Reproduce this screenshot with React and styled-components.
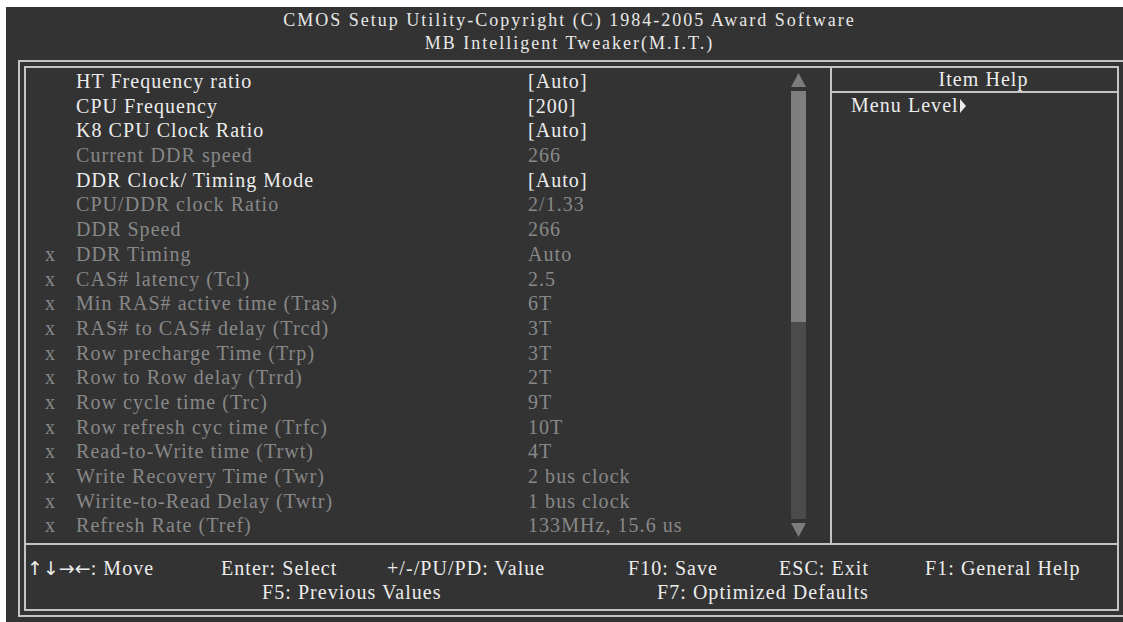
import styled, { createGlobalStyle } from "styled-components"

const rows = [
    { label: "HT Frequency ratio", value: "[Auto]", on: true },
    { label: "CPU Frequency", value: "[200]", on: true },
    { label: "K8 CPU Clock Ratio", value: "[Auto]", on: true },
    { label: "Current DDR speed", value: "266" },
    { label: "DDR Clock/ Timing Mode", value: "[Auto]", on: true },
    { label: "CPU/DDR clock Ratio", value: "2/1.33" },
    { label: "DDR Speed", value: "266" },
    { x: true, label: "DDR Timing", value: "Auto" },
    { x: true, label: "CAS# latency (Tcl)", value: "2.5" },
    { x: true, label: "Min RAS# active time (Tras)", value: "6T" },
    { x: true, label: "RAS# to CAS# delay (Trcd)", value: "3T" },
    { x: true, label: "Row precharge Time (Trp)", value: "3T" },
    { x: true, label: "Row to Row delay (Trrd)", value: "2T" },
    { x: true, label: "Row cycle time (Trc)", value: "9T" },
    { x: true, label: "Row refresh cyc time (Trfc)", value: "10T" },
    { x: true, label: "Read-to-Write time (Trwt)", value: "4T" },
    { x: true, label: "Write Recovery Time (Twr)", value: "2 bus clock" },
    { x: true, label: "Wirite-to-Read Delay (Twtr)", value: "1 bus clock" },
    { x: true, label: "Refresh Rate (Tref)", value: "133MHz, 15.6 us" },
]

export default function App() {
    return (
        <>
            <GlobalStyle />
            <Screen>
                <Header>
                    <div>CMOS Setup Utility-Copyright (C) 1984-2005 Award Software</div>
                    <div>MB Intelligent Tweaker(M.I.T.)</div>
                </Header>
                <OuterFrame>
                    <InnerFrame>
                        <Main>
                            <ListPanel>
                                <Rows>
                                    {rows.map((r) => (
                                        <Row key={r.label} $on={r.on}>
                                            <span>{r.x ? "x" : ""}</span>
                                            <span>{r.label}</span>
                                            <span>{r.value}</span>
                                        </Row>
                                    ))}
                                </Rows>
                                <ScrollBar>
                                    <Arrow viewBox="0 0 15 14">
                                        <polygon points="7.5,0 15,14 0,14" />
                                    </Arrow>
                                    <Thumb />
                                    <Track />
                                    <Arrow viewBox="0 0 15 14">
                                        <polygon points="0,0 15,0 7.5,14" />
                                    </Arrow>
                                </ScrollBar>
                            </ListPanel>
                            <HelpPanel>
                                <HelpTitle>Item Help</HelpTitle>
                                <HelpLine>
                                    Menu Level
                                    <svg width="6" height="14" viewBox="0 0 6 14">
                                        <polygon points="0,0 6,7 0,14" fill="#ececec" />
                                    </svg>
                                </HelpLine>
                            </HelpPanel>
                        </Main>
                        <Footer>
                            <KeyRow $cols="194px 166px 241px 151px 146px 1fr" $pad={1}>
                                <span><Arrows>↑↓→←</Arrows>: Move</span>
                                <span>Enter: Select</span>
                                <span>+/-/PU/PD: Value</span>
                                <span>F10: Save</span>
                                <span>ESC: Exit</span>
                                <span>F1: General Help</span>
                            </KeyRow>
                            <KeyRow $cols="395px 1fr" $pad={236}>
                                <span>F5: Previous Values</span>
                                <span>F7: Optimized Defaults</span>
                            </KeyRow>
                        </Footer>
                    </InnerFrame>
                </OuterFrame>
            </Screen>
        </>
    )
}

const GlobalStyle = createGlobalStyle`
    html, body {
        margin: 0;
        background: #ffffff;
        overflow: hidden;
    }
`
const Screen = styled.div`
    width: 1127px;
    height: 615px;
    margin: 7px 0 0 6px;
    background-color: #333333;
    font-family: "Liberation Serif", "Times New Roman", serif;
    color: #ececec;
    overflow: hidden;
`
const Header = styled.div`
    height: 53px;
    box-sizing: border-box;
    padding-top: 2px;
    text-align: center;
    font-size: 18px;
    line-height: 23.3px;
    letter-spacing: 2px;
    color: #e8e8e8;
`
const OuterFrame = styled.div`
    margin: 0 8px 0 12px;
    border: 2px solid #c4c4c4;
    padding: 4px;
`
const InnerFrame = styled.div`
    border: 2px solid #c4c4c4;
    height: 541px;
    display: flex;
    flex-direction: column;
    font-size: 20px;
    letter-spacing: 1.05px;
`
const Main = styled.div`
    height: 475px;
    display: flex;
    border-bottom: 2px solid #c4c4c4;
`
const ListPanel = styled.div`
    width: 804px;
    display: flex;
`
const Rows = styled.div`
    flex: 1;
    padding: 1px 0 0 19px;
`
const Row = styled.div`
    display: grid;
    grid-template-columns: 31px 452px 1fr;
    height: 24.7px;
    line-height: 24.7px;
    white-space: nowrap;
    color: ${(p) => (p.$on ? "#ececec" : "#888888")};
`
const ScrollBar = styled.div`
    width: 15px;
    margin-right: 24px;
    padding: 5px 0 6px;
    display: flex;
    flex-direction: column;
    gap: 4px;
`
const Arrow = styled.svg`
    width: 15px;
    height: 14px;
    flex: none;
    fill: #7c7c7c;
`
const Thumb = styled.div`
    height: 231px;
    background-color: #7f7f7f;
`
const Track = styled.div`
    flex: 1;
    margin-top: -4px;
    background-color: #4b4b4b;
`
const HelpPanel = styled.div`
    flex: 1;
    border-left: 2px solid #c4c4c4;
`
const HelpTitle = styled.div`
    height: 22.5px;
    line-height: 22.5px;
    padding-left: 18px;
    text-align: center;
    border-bottom: 2px solid #c4c4c4;
`
const HelpLine = styled.div`
    height: 24.7px;
    line-height: 24.7px;
    padding-left: 19px;
    svg {
        vertical-align: -1px;
        margin-left: 1px;
    }
`
const Footer = styled.div`
    flex: 1;
    padding-top: 11px;
`
const KeyRow = styled.div`
    display: grid;
    grid-template-columns: ${(p) => p.$cols};
    padding-left: ${(p) => p.$pad}px;
    height: 24px;
    line-height: 24px;
    white-space: nowrap;
`
const Arrows = styled.span`
    font-family: "DejaVu Sans", sans-serif;
    font-size: 19px;
    letter-spacing: 0;
`
